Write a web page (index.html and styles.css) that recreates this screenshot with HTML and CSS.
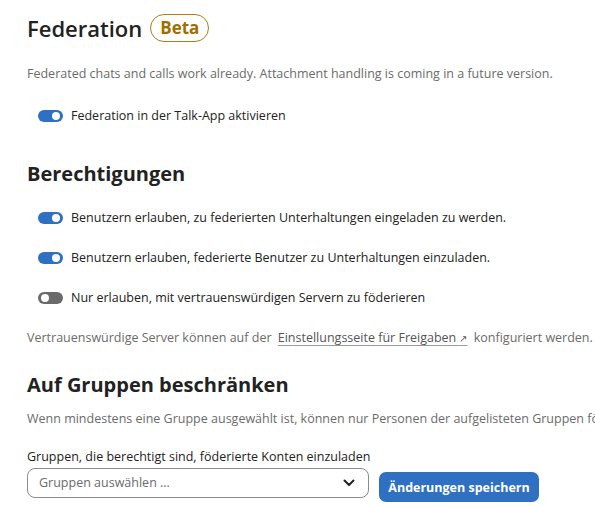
FILE: index.html
```html
<!DOCTYPE html>
<html lang="de">
<head>
<meta charset="utf-8">
<link rel="stylesheet" href="styles.css">
</head>
<body>
<div class="page">
  <div class="title-row">
    <h1 class="title">Federation</h1>
    <span class="badge">Beta</span>
  </div>
  <p class="desc desc-first">Federated chats and calls work already. Attachment handling is coming in a future version.</p>
  <label class="switch-row row-first"><span class="switch on"></span><span>Federation in der Talk-App aktivieren</span></label>

  <h2 class="heading heading-perm">Berechtigungen</h2>
  <label class="switch-row row-first"><span class="switch on"></span><span>Benutzern erlauben, zu federierten Unterhaltungen eingeladen zu werden.</span></label>
  <label class="switch-row row-next"><span class="switch on"></span><span>Benutzern erlauben, federierte Benutzer zu Unterhaltungen einzuladen.</span></label>
  <label class="switch-row row-next"><span class="switch off"></span><span>Nur erlauben, mit vertrauenswürdigen Servern zu föderieren</span></label>
  <p class="desc desc-trusted">Vertrauenswürdige Server können auf der <a class="link" href="#">Einstellungsseite für Freigaben <span class="arrow">↗</span></a> konfiguriert werden.</p>

  <h2 class="heading heading-groups">Auf Gruppen beschränken</h2>
  <p class="desc desc-groups">Wenn mindestens eine Gruppe ausgewählt ist, können nur Personen der aufgelisteten Gruppen föderierte Konten einladen.</p>
  <div class="field-label">Gruppen, die berechtigt sind, föderierte Konten einzuladen</div>
  <div class="form-row">
    <div class="select">
      <span class="placeholder">Gruppen auswählen ...</span>
      <svg class="chevron" width="14" height="14" viewBox="0 0 14 14"><path d="M2.5 4.5 L7 9 L11.5 4.5" fill="none" stroke="#222" stroke-width="2" stroke-linecap="round" stroke-linejoin="round"/></svg>
    </div>
    <button class="save">Änderungen speichern</button>
  </div>
</div>
</body>
</html>
```
FILE: styles.css
```css
html, body {
  margin: 0;
  padding: 0;
  background: #fff;
}
body {
  font-family: "Open Sans", "Noto Sans", sans-serif;
  font-size: 12.5px;
  line-height: 20px;
  color: #222;
  overflow: hidden;
}
.page {
  padding: 12px 0 0 27px;
  display: flex;
  flex-direction: column;
  align-items: flex-start;
  overflow: hidden;
  width: 568px;
}
.title-row {
  display: flex;
  align-items: center;
  gap: 8px;
  height: 32px;
}
.title {
  margin: 0;
  font-size: 22px;
  font-weight: 600;
  line-height: 32px;
  color: #222;
}
.badge {
  box-sizing: border-box;
  height: 28px;
  padding: 0 9px;
  border: 1px solid #b07c10;
  border-radius: 14px;
  color: #a06f00;
  font-size: 17px;
  font-weight: 700;
  line-height: 26px;
}
.desc {
  margin: 0;
  color: #6b6b6b;
  white-space: nowrap;
}
.desc-first { margin-top: 20px; }
.switch-row {
  display: flex;
  align-items: center;
  gap: 8px;
  margin-left: 11px;
  color: #222;
}
.row-first { margin-top: 22px; }
.row-next { margin-top: 20px; }
.heading-perm + .switch-row { margin-top: 20px; }
.switch {
  position: relative;
  box-sizing: border-box;
  width: 25px;
  height: 12px;
  border-radius: 6px;
  flex: none;
}
.switch.on { background: #2e71c2; }
.switch.off { background: #6a6a6a; }
.switch::after {
  content: "";
  position: absolute;
  top: 2px;
  width: 8px;
  height: 8px;
  border-radius: 50%;
  background: #fff;
}
.switch.on::after { right: 3px; }
.switch.off::after { left: 3px; }
.heading {
  margin: 0;
  font-size: 20px;
  font-weight: 700;
  line-height: 28px;
  color: #222;
}
.heading-perm { margin-top: 34px; }
.desc-trusted { margin-top: 20px; }
.link {
  color: #555;
  text-decoration: underline;
  text-decoration-color: #999;
  text-underline-offset: 3px;
  margin: 0 3px;
}
.arrow { font-size: 10px; }
.heading-groups { margin-top: 23px; }
.desc-groups { margin-top: 10px; }
.field-label {
  margin-top: 18px;
  color: #222;
}
.form-row {
  margin-top: 1px;
  display: flex;
  align-items: flex-start;
  gap: 10px;
}
.select {
  box-sizing: border-box;
  width: 342px;
  height: 30px;
  border: 1px solid #8c8c8c;
  border-radius: 8px;
  display: flex;
  align-items: center;
  justify-content: space-between;
  padding: 0 12px 0 11px;
}
.placeholder { color: #6b6b6b; }
.chevron { display: block; }
.save {
  margin-top: 4px;
  box-sizing: border-box;
  width: 160px;
  height: 30px;
  border: none;
  border-radius: 7px;
  background: #2e71c2;
  color: #fff;
  font-family: inherit;
  font-size: 12.5px;
  font-weight: 700;
  padding: 0;
}
```
